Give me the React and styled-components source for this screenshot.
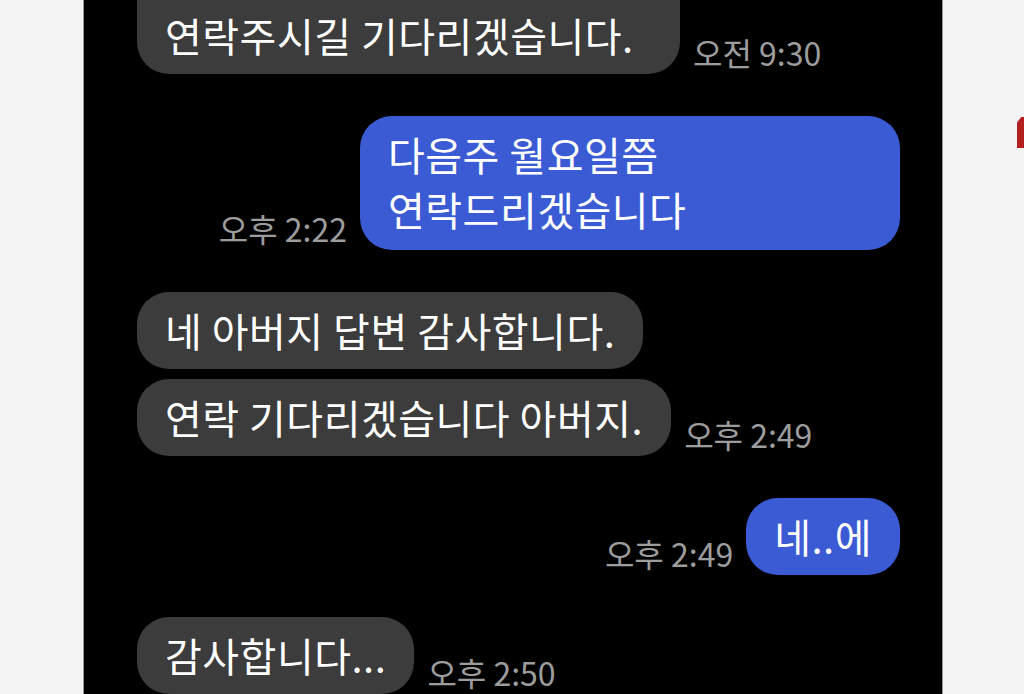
import React from "react";
import styled, { createGlobalStyle } from "styled-components";

const GlobalStyle = createGlobalStyle`
  html, body {
    margin: 0;
    padding: 0;
    background: #f3f3f3;
  }
  body {
    font-family: "Noto Sans CJK KR", "Noto Sans", sans-serif;
  }
`;

const Page = styled.div`
  width: 1024px;
  height: 694px;
  display: flex;
  overflow: hidden;
  background: #f3f3f3;
`;

const Gutter = styled.div`
  width: 83px;
  flex-shrink: 0;
`;

const Screen = styled.div`
  width: 858px;
  flex-shrink: 0;
  background: #000;
  border-left: 1px solid #9a9a9a;
  border-right: 1px solid #9a9a9a;
  overflow: hidden;
`;

const Side = styled.div`
  flex: 1;
  display: flex;
  justify-content: flex-end;
  padding-top: 117px;
`;

const RedTab = styled.div`
  width: 7px;
  height: 31px;
  background: #b3201f;
  clip-path: polygon(100% 0, 100% 100%, 0 100%, 0 18%, 60% 0);
`;

const Thread = styled.div`
  margin-top: -44px;
  padding: 0 42px 0 53px;
  display: flex;
  flex-direction: column;
`;

const Group = styled.div`
  display: flex;
  flex-direction: column;
  gap: 10px;
  margin-bottom: 42px;
`;

const Row = styled.div`
  display: flex;
  align-items: flex-end;
  justify-content: flex-start;
  flex-direction: ${(p) => (p.mine ? "row-reverse" : "row")};
  gap: 13px;
`;

const Bubble = styled.div`
  box-sizing: border-box;
  width: ${(p) => (p.width ? `${p.width}px` : "auto")};
  background: ${(p) => (p.mine ? "#3b5bd4" : "#3c3c3c")};
  color: #fff;
  border-radius: 32px;
  padding: ${(p) => (p.tall ? "52px" : "11px")} 28px ${(p) => (p.lines > 1 ? "13px" : "11px")} 28px;
  font-size: 40px;
  line-height: 55px;
  letter-spacing: 0.5px;
  white-space: nowrap;
`;

const Time = styled.span`
  color: #9d9d9d;
  font-size: 32px;
  line-height: 36px;
  margin-bottom: 4px;
  white-space: nowrap;
`;

const messages = [
  [{ width: 543, text: ["연락주시길 기다리겠습니다."], time: "오전 9:30", tall: true }],
  [{ mine: true, width: 540, text: ["다음주 월요일쯤", "연락드리겠습니다"], time: "오후 2:22" }],
  [
    { text: ["네 아버지 답변 감사합니다."] },
    { text: ["연락 기다리겠습니다 아버지."], time: "오후 2:49" },
  ],
  [{ mine: true, text: ["네..에"], time: "오후 2:49" }],
  [{ text: ["감사합니다..."], time: "오후 2:50" }],
];

export default function App() {
  return (
    <Page>
      <GlobalStyle />
      <Gutter />
      <Screen>
        <Thread>
          {messages.map((group, gi) => (
            <Group key={gi}>
              {group.map((m, i) => (
                <Row key={i} mine={m.mine ? 1 : 0}>
                  <Bubble
                    mine={m.mine ? 1 : 0}
                    tall={m.tall ? 1 : 0}
                    width={m.width}
                    lines={m.text.length}
                  >
                    {m.text.map((line, li) => (
                      <div key={li}>{line}</div>
                    ))}
                  </Bubble>
                  {m.time && <Time>{m.time}</Time>}
                </Row>
              ))}
            </Group>
          ))}
        </Thread>
      </Screen>
      <Side>
        <RedTab />
      </Side>
    </Page>
  );
}
